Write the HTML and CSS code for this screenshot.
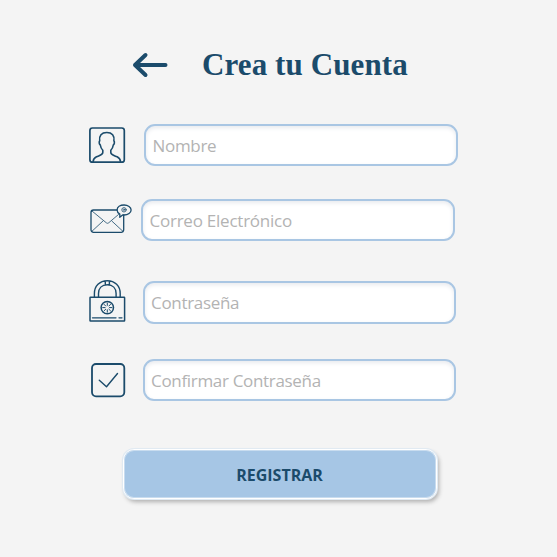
FILE: index.html
```
<!DOCTYPE html>
<html lang="es">
<head>
<meta charset="utf-8">
<title>Crea tu Cuenta</title>
<link rel="stylesheet" href="styles.css">
</head>
<body>
<main class="page">
  <header class="header">
    <svg class="back" width="36" height="26" viewBox="0 0 36 26"><path d="M13.500 3 3 13l10.500 10M3 13h30.500" /></svg>
    <h1 class="title">Crea tu Cuenta</h1>
  </header>
  <form class="form">
    <div class="row name">
      <svg class="icon" width="44" height="42" viewBox="88 124 44 42"><rect x="89.900" y="128" width="34.400" height="34.200" rx="2.500" stroke-width="1.700"/><path stroke-width="1.600" d="M93 162c.3-3 1.200-4.200 3.500-5.200 3.300-1.500 6.300-2 6.300-4.300v-2.300c-1.300-1.300-2.200-3-2.500-5.200-1.100-.7-1.500-3-.6-4.200-.8-5.300 1.800-8.300 7.100-8.300s7.900 3 7.100 8.300c.9 1.200.5 3.500-.6 4.200-.3 2.200-1.200 3.900-2.500 5.200v2.300c0 2.300 3 2.800 6.300 4.300 2.300 1 3.200 2.200 3.500 5.200"/></svg>
      <input class="field" type="text" placeholder="Nombre">
    </div>
    <div class="row mail">
      <svg class="icon" width="44" height="42" viewBox="88 199 44 42"><path stroke-width="1.300" d="M117 210H93.500a2.500 2.500 0 0 0-2.500 2.500v17.300a2.500 2.500 0 0 0 2.500 2.500h27.700a2.500 2.500 0 0 0 2.500-2.500V215"/><path stroke-width=".8" d="m92 211 14.300 11.800q1.200 1 2.400 0l9.800-8.300M91.800 231.400l11-10.200M123 231.400l-11-10.200"/><path stroke-width="1.300" d="M119.800 217.300v-3.200c-1.700-1-2.700-2.500-2.700-4.200 0-2.900 3.100-4.900 7-4.900s7 2.200 7 5-3.100 5-7 5h-1.500z"/><circle cx="124" cy="209.800" r="2.200" stroke-width=".8"/><circle cx="124" cy="209.700" r=".8" stroke-width=".7"/></svg>
      <input class="field" type="email" placeholder="Correo Electrónico">
    </div>
    <div class="row password">
      <svg class="icon" width="44" height="43" viewBox="88 281 44 43"><path stroke-width="1.400" d="M94.400 297v-3.500c0-7.500 5.200-12.800 12.900-12.800s12.900 5.300 12.900 12.800v3.500M98.500 297v-3.500c0-5.200 3.300-8.700 8.800-8.700s8.800 3.500 8.800 8.700v3.500M105.300 281v4M109.400 281v4"/><rect x="90" y="297.300" width="34.600" height="23.700" rx=".5" stroke-width="1.500"/><circle cx="107.300" cy="307.600" r="6.200" stroke-width="1.500"/><path stroke-width="1" d="M107.300 303v2.400M107.300 309.800v2.400M102.700 307.600h2.400M109.500 307.600h2.400M104.100 304.400l1.600 1.600M108.900 309.200l1.600 1.600M104.100 310.800l1.600-1.600M108.900 306l1.600-1.600"/><path stroke-width="1.300" d="M92.500 317.800h23.500M119 317.800h3"/></svg>
      <input class="field" type="password" placeholder="Contraseña">
    </div>
    <div class="row confirm">
      <svg class="icon" width="44" height="42" viewBox="88 359 44 42"><rect x="92" y="364" width="32.300" height="32.300" rx="4" stroke-width="1.800"/><path stroke-width="1.400" d="m99.300 380.300 7.200 6.500 11-13.300"/></svg>
      <input class="field" type="password" placeholder="Confirmar Contraseña">
    </div>
    <button class="submit" type="button">REGISTRAR</button>
  </form>
</main>
</body>
</html>
```
FILE: styles.css
```
* { box-sizing: border-box; }
body { margin: 0; background: #f4f4f4; color: #1b4b6b; }
.page { width: 557px; height: 557px; padding-top: 45px; overflow: hidden; }
.header { display: flex; align-items: center; height: 40px; padding-left: 132px; gap: 34px; }
.back { fill: none; stroke: #1b4b6b; stroke-width: 4; stroke-linecap: round; stroke-linejoin: round; }
.title { margin: 0; font: bold 31px/40px "Liberation Serif", serif; letter-spacing: .1px; white-space: nowrap; }
.form { display: flex; flex-direction: column; padding: 39px 0 0 88px; }
.row { display: flex; height: 42px; }
.icon { flex: none; overflow: visible; fill: none; stroke: #1b4b6b; stroke-linecap: round; stroke-linejoin: round; }
.field {
  width: 313.500px;
  height: 100%;
  padding: 1px 6.500px 0;
  border: 2px solid #a9c6e3;
  border-radius: 11px;
  background: #fff;
  box-shadow: inset 0 2px 4px #e8eaee;
  font: 400 17px "Open Sans", sans-serif;
  letter-spacing: -.32px;
  outline: none;
}
.field::placeholder { color: #b3b3b3; opacity: 1; }
.name { gap: 12px; margin-bottom: 33px; }
.mail { gap: 9px; margin-bottom: 40px; }
.mail .field { letter-spacing: -.24px; }
.password { gap: 10.500px; height: 43px; margin-bottom: 35px; }
.password .field { padding: 0 6.500px 1px; }
.confirm { gap: 10.500px; margin-bottom: 48px; }
.submit {
  width: 314px;
  height: 50px;
  margin-left: 35px;
  padding: 1px 1px 0 0;
  border: 1px solid #fff;
  border-radius: 11px;
  background: #a6c6e5;
  box-shadow: inset 0 0 0 1px #c8dcef, 0 0 0 1px #e1eaf2, 2px 3px 4px #b0b0b0;
  color: #1b4b6b;
  font: bold 16px "Open Sans", sans-serif;
}
```
